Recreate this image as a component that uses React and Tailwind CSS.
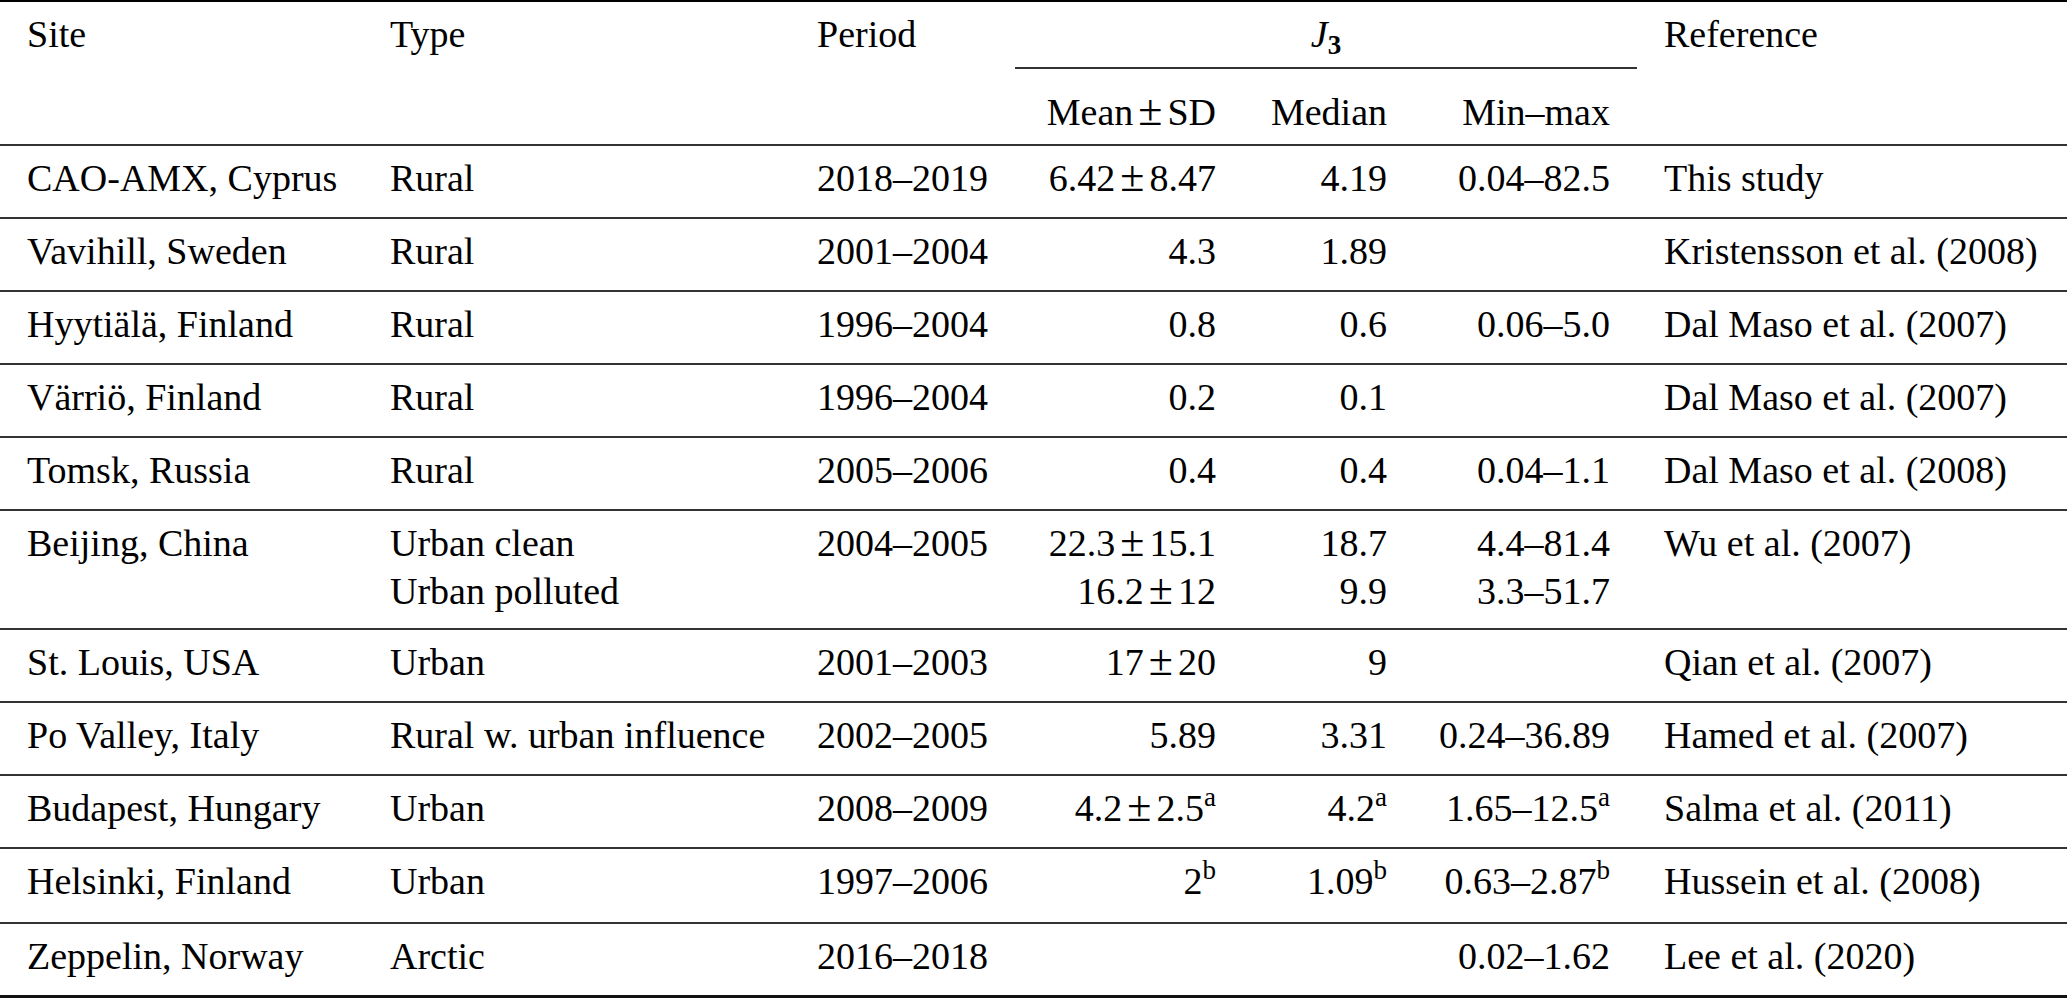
import React from 'react';

const Sup = ({ children }) => (
  <span className="text-[27px] leading-none align-[15px]">{children}</span>
);

const PlusMinus = () => <span className="mx-[5px] text-[44px] leading-none">±</span>;

const Pm = ({ a, b, sup }) => (
  <>
    {a}
    <PlusMinus />
    {b}
    {sup && <Sup>{sup}</Sup>}
  </>
);

const rows = [
  { site: 'CAO-AMX, Cyprus', type: ['Rural'], period: '2018–2019', mean: [<Pm a="6.42" b="8.47" />], median: ['4.19'], range: ['0.04–82.5'], ref: 'This study', h: 'h-[71px]' },
  { site: 'Vavihill, Sweden', type: ['Rural'], period: '2001–2004', mean: ['4.3'], median: ['1.89'], range: [''], ref: 'Kristensson et al. (2008)', h: 'h-[71px]' },
  { site: 'Hyytiälä, Finland', type: ['Rural'], period: '1996–2004', mean: ['0.8'], median: ['0.6'], range: ['0.06–5.0'], ref: 'Dal Maso et al. (2007)', h: 'h-[71px]' },
  { site: 'Värriö, Finland', type: ['Rural'], period: '1996–2004', mean: ['0.2'], median: ['0.1'], range: [''], ref: 'Dal Maso et al. (2007)', h: 'h-[71px]' },
  { site: 'Tomsk, Russia', type: ['Rural'], period: '2005–2006', mean: ['0.4'], median: ['0.4'], range: ['0.04–1.1'], ref: 'Dal Maso et al. (2008)', h: 'h-[71px]' },
  {
    site: 'Beijing, China',
    type: ['Urban clean', 'Urban polluted'],
    period: '2004–2005',
    mean: [<Pm a="22.3" b="15.1" />, <Pm a="16.2" b="12" />],
    median: ['18.7', '9.9'],
    range: ['4.4–81.4', '3.3–51.7'],
    ref: 'Wu et al. (2007)',
    h: 'h-[117px]',
  },
  { site: 'St. Louis, USA', type: ['Urban'], period: '2001–2003', mean: [<Pm a="17" b="20" />], median: ['9'], range: [''], ref: 'Qian et al. (2007)', h: 'h-[71px]' },
  { site: 'Po Valley, Italy', type: ['Rural w. urban influence'], period: '2002–2005', mean: ['5.89'], median: ['3.31'], range: ['0.24–36.89'], ref: 'Hamed et al. (2007)', h: 'h-[71px]' },
  {
    site: 'Budapest, Hungary',
    type: ['Urban'],
    period: '2008–2009',
    mean: [<Pm a="4.2" b="2.5" sup="a" />],
    median: [<>4.2<Sup>a</Sup></>],
    range: [<>1.65–12.5<Sup>a</Sup></>],
    ref: 'Salma et al. (2011)',
    h: 'h-[71px]',
  },
  {
    site: 'Helsinki, Finland',
    type: ['Urban'],
    period: '1997–2006',
    mean: [<>2<Sup>b</Sup></>],
    median: [<>1.09<Sup>b</Sup></>],
    range: [<>0.63–2.87<Sup>b</Sup></>],
    ref: 'Hussein et al. (2008)',
    h: 'h-[73px]',
  },
  { site: 'Zeppelin, Norway', type: ['Arctic'], period: '2016–2018', mean: [''], median: [''], range: ['0.02–1.62'], ref: 'Lee et al. (2020)', h: 'h-[71px]' },
];

const Lines = ({ items }) => (
  <div className="flex flex-col">
    {items.map((it, i) => (
      <div key={i} className="h-[48px] whitespace-nowrap">{it}</div>
    ))}
  </div>
);

const Rule = () => <div className="h-[2px] bg-[#333]" />;

export default function App() {
  return (
    <div className="w-[2067px] h-[998px] bg-white text-black font-[family-name:'Liberation_Serif','Times_New_Roman',serif] text-[38px] leading-[48px]">
      <div className="h-[2px] bg-black" />

      {/* header */}
      <div className="flex h-[142px]">
        <div className="w-[390px] pl-[27px] pt-[8px]">Site</div>
        <div className="w-[427px] pt-[8px]">Type</div>
        <div className="w-[198px] pt-[8px]">Period</div>
        <div className="w-[622px] flex flex-col">
          <div className="h-[65px] pt-[8px] text-center">
            <span className="italic">J</span>
            <span className="font-bold text-[27px] leading-none align-[-7px]">3</span>
          </div>
          <Rule />
          <div className="grid grid-cols-[201px_171px_223px] pt-[19px] text-right whitespace-nowrap">
            <div>
              Mean<PlusMinus />SD
            </div>
            <div>Median</div>
            <div>Min–max</div>
          </div>
        </div>
        <div className="pl-[27px] pt-[8px]">Reference</div>
      </div>
      <Rule />

      {rows.map((r, i) => (
        <React.Fragment key={i}>
          <div className={`grid grid-cols-[390px_427px_198px_201px_171px_223px_1fr] pt-[8px] ${r.h}`}>
            <div className="pl-[27px] whitespace-nowrap">{r.site}</div>
            <Lines items={r.type} />
            <div>{r.period}</div>
            <div className="text-right"><Lines items={r.mean} /></div>
            <div className="text-right"><Lines items={r.median} /></div>
            <div className="text-right"><Lines items={r.range} /></div>
            <div className="pl-[54px] whitespace-nowrap">{r.ref}</div>
          </div>
          {i < rows.length - 1 ? <Rule /> : <div className="h-[3px] bg-[#111]" />}
        </React.Fragment>
      ))}
    </div>
  );
}
